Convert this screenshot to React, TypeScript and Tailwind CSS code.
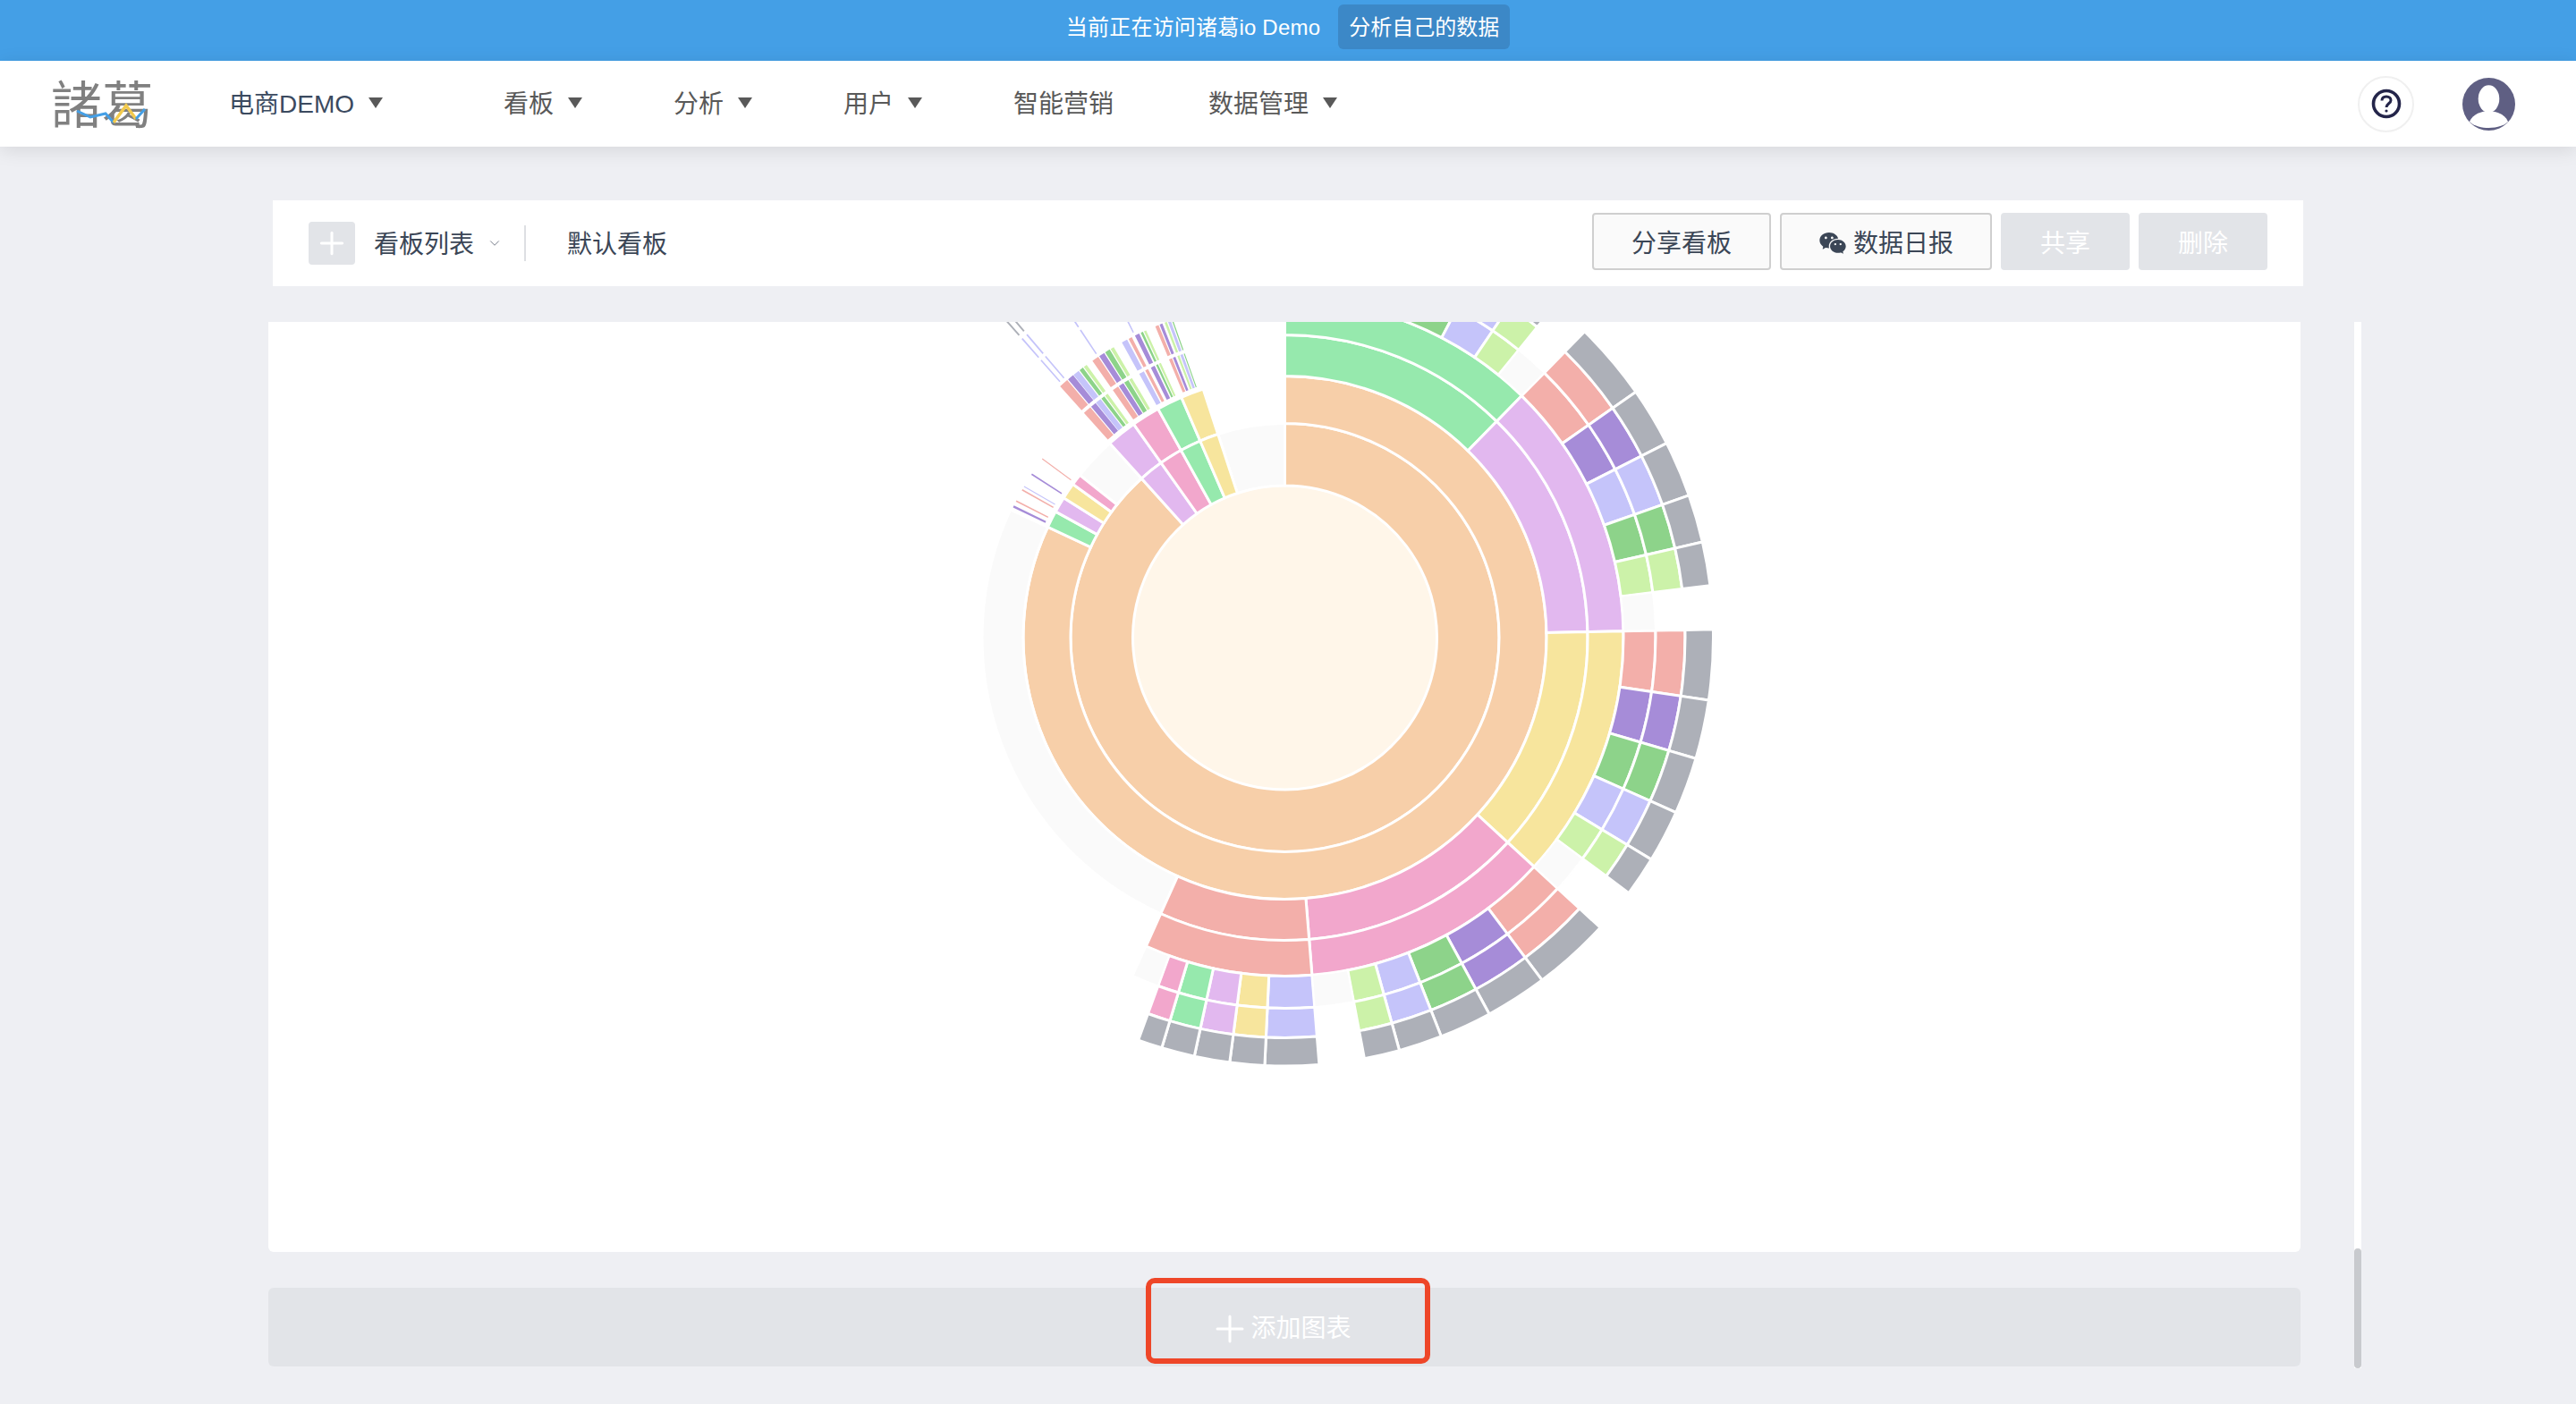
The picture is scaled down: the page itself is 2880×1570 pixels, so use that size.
import React from 'react';
import { ChevronDown, Plus } from 'lucide-react';
import { RiWechatFill } from 'react-icons/ri';

const CX = 1136.5;
const CY = 353;

// ring edges, the white stroke makes the gaps
const R = [170, 239.5, 292.5, 338.5, 378.5, 414.5, 447.5, 479];

const orange = '#f7cfa9';
const green = '#96e9ad';
const purple = '#e2b8ef';
const yellow = '#f7e59d';
const pink = '#f2a7cc';
const red = '#f3afaa';
const dkpurple = '#a68cd8';
const lavender = '#c5c4fa';
const dkgreen = '#8dd38a';
const ltgreen = '#ccf2a9';
const gray = '#adb0b8';
const faint = '#fafafa';

function sector(r0: number, r1: number, a0: number, a1: number) {
  const rad = (a: number) => ((a - 90) * Math.PI) / 180;
  const p = (r: number, a: number) => `${(CX + r * Math.cos(rad(a))).toFixed(2)} ${(CY + r * Math.sin(rad(a))).toFixed(2)}`;
  const large = a1 - a0 > 180 ? 1 : 0;
  return `M${p(r0, a0)} A${r0} ${r0} 0 ${large} 1 ${p(r0, a1)} L${p(r1, a1)} A${r1} ${r1} 0 ${large} 0 ${p(r1, a0)} Z`;
}

type Seg = [number, number, string];

const parents: Seg[] = [
  [0, 44.4, green],
  [44.4, 88.9, purple],
  [88.9, 132.6, yellow],
  [132.6, 175.4, pink],
  [175.4, 204.2, red],
];

const leaves: Seg[] = [
  [14, 21, dkpurple],
  [21, 27.6, dkgreen],
  [27.6, 34.1, lavender],
  [34.1, 39.1, ltgreen],
  [44.4, 55, red],
  [55, 63, dkpurple],
  [63, 70.6, lavender],
  [70.6, 77.1, dkgreen],
  [77.1, 83, ltgreen],
  [88.9, 98.4, red],
  [98.4, 106.4, dkpurple],
  [106.4, 114.1, dkgreen],
  [114.1, 121.2, lavender],
  [121.2, 126.6, ltgreen],
  [132.6, 143.1, red],
  [143.1, 151.5, dkpurple],
  [151.5, 158.6, dkgreen],
  [158.6, 164.5, lavender],
  [164.5, 169.3, ltgreen],
  [175.4, 182.7, lavender],
  [182.7, 187.4, yellow],
  [187.4, 192.2, purple],
  [192.2, 196.7, green],
  [196.7, 200, pink],
];

const ends: [number, number][] = [[39.1, 44.4], [83, 88.9], [126.6, 132.6], [169.3, 175.4], [200, 204.2]];

const small: Seg[] = [
  [-65, -61.2, green],
  [-61.2, -57.7, purple],
  [-57.7, -54.1, yellow],
  [-54.1, -51.6, pink],
  [-42, -35.3, purple],
  [-35.3, -29, pink],
  [-29, -23.3, green],
  [-23.3, -18.2, yellow],
];

// thin strips above the small slices, in rings 3 and 4
const strips: Seg[] = [
  [-64.4, -64, dkpurple],
  [-63.2, -62.9, red],
  [-60.8, -60.5, red],
  [-60, -59.8, lavender],
  [-57.3, -57, dkpurple],
  [-53.7, -53.5, red],
  [-41.8, -40.2, red],
  [-40, -38.9, dkpurple],
  [-38.8, -37.7, lavender],
  [-37.5, -36.8, dkgreen],
  [-36.6, -36, ltgreen],
  [-34.8, -33.6, red],
  [-33.4, -32.4, dkpurple],
  [-32.2, -31.3, dkgreen],
  [-31.1, -30.5, ltgreen],
  [-28.9, -27.9, lavender],
  [-27.6, -27, red],
  [-26.4, -25.6, dkpurple],
  [-25.3, -24.9, dkgreen],
  [-24.7, -24.3, ltgreen],
  [-22.6, -22, red],
  [-21.8, -21.3, dkpurple],
  [-20.9, -20.5, ltgreen],
  [-20.3, -19.8, lavender],
  [-19.6, -19.4, dkgreen],
];

const hair = [-41.3, -40.4, -33.6, -26.4];

function Sunburst() {
  return (
    <svg width="2272" height="1040" className="block">
      <circle cx={CX} cy={CY} r={R[0] - 1} fill="#fff6e9" />
      <path d={sector(R[0], R[1], 0, 318)} fill={orange} stroke="#fff" strokeWidth="3" />
      <path d={sector(R[1], R[2], 0, 295)} fill={orange} stroke="#fff" strokeWidth="3" />
      <path d={sector(R[0], R[1], 341.8, 360)} fill={faint} stroke="#fff" strokeWidth="3" />
      <path d={sector(R[1], R[2], 308.4, 318)} fill={faint} stroke="#fff" strokeWidth="3" />
      <path d={sector(R[2], R[3], 204.2, 295)} fill={faint} stroke="#fff" strokeWidth="3" />
      {small.map(([a, b, c], i) =>
        [1, 0].map((ring) =>
          a < -50 && ring === 0 ? null : (
            <path key={`${i}-${ring}`} d={sector(R[ring], R[ring + 1], a, b)} fill={c} stroke="#fff" strokeWidth="3" />
          )
        )
      )}
      {parents.map(([a, b, c], i) =>
        [2, 3].map((ring) => (
          <path key={`${i}-${ring}`} d={sector(R[ring], R[ring + 1], a, b)} fill={c} stroke="#fff" strokeWidth="3" />
        ))
      )}
      {leaves.map(([a, b, c], i) =>
        [4, 5].map((ring) => (
          <path key={`${i}-${ring}`} d={sector(R[ring], R[ring + 1], a, b)} fill={c} stroke="#fff" strokeWidth="3" />
        ))
      )}
      {leaves.map(([a, b], i) => (
        <path key={i} d={sector(R[6], R[7], a, b)} fill={gray} stroke="#fff" strokeWidth="3" />
      ))}
      {ends.map(([a, b], i) => (
        <path key={i} d={sector(R[4], R[5], a, b)} fill={faint} stroke="#fff" strokeWidth="2" />
      ))}
      {strips.map(([a, b, c], i) => (
        <g key={i}>
          <path d={sector(297, 337, a, b)} fill={c} />
          {a > -50 && <path d={sector(341, 377, a, b)} fill={c} />}
        </g>
      ))}
      {hair.map((a, i) => (
        <g key={i}>
          <path d={sector(381, 413, a - 0.12, a + 0.12)} fill={lavender} />
          <path d={sector(417, 445, a - 0.12, a + 0.12)} fill={lavender} />
          <path d={sector(450, 478, a - 0.12, a + 0.12)} fill={gray} />
        </g>
      ))}
    </svg>
  );
}

function Caret() {
  return (
    <svg width="16" height="12" viewBox="0 0 16 12" className="mb-[4px]">
      <path d="M0 0H16L8 12Z" fill="#595959" />
    </svg>
  );
}

function NavItem({ label, caret = true, className = '' }: { label: string; caret?: boolean; className?: string }) {
  return (
    <div className={`flex items-center gap-[16px] pt-[2px] ${className}`}>
      <span>{label}</span>
      {caret && <Caret />}
    </div>
  );
}

export default function App() {
  return (
    <div className="flex h-[1570px] flex-col overflow-hidden bg-[#eeeff3] font-['Liberation_Sans','Noto_Sans_CJK_SC',sans-serif]">
      <div className="flex h-[68px] items-center justify-center gap-[20px] bg-[#449fe6] pb-[8px] text-[24px] text-white">
        <span className="pt-[2px] tracking-[0.2px]">当前正在访问诸葛io Demo</span>
        <button className="h-[50px] w-[192px] rounded-[6px] bg-[#3c88c7] pt-[2px]">分析自己的数据</button>
      </div>

      <div className="relative z-10 flex h-[96px] items-center bg-white text-[28px] text-[#595959] shadow-[0_4px_20px_rgba(0,0,0,0.1)]">
        <div className="relative ml-[57px] h-[66px] w-[114px] text-center font-['Noto_Sans_CJK_TC',sans-serif] text-[57px] leading-[60px] font-normal text-[#808080]">
          諸葛
          <svg width="114" height="66" viewBox="0 0 114 66" className="absolute top-0 left-0">
            <path d="M29 41L44 48L61 44L70 54" fill="none" stroke="#449fe6" strokeWidth="3" />
            <path d="M70 54L84 35L95 50" fill="none" stroke="#f2ca4e" strokeWidth="3.5" />
            <path d="M95 50L105 39" fill="none" stroke="#449fe6" strokeWidth="3" />
          </svg>
        </div>
        <NavItem label="电商DEMO" className="ml-[85px] gap-[14px] text-[#3b4a5f]" />
        <NavItem label="看板" className="ml-[135px]" />
        <NavItem label="分析" className="ml-[102px]" />
        <NavItem label="用户" className="ml-[102px]" />
        <NavItem label="智能营销" caret={false} className="ml-[102px]" />
        <NavItem label="数据管理" className="ml-[106px]" />
        <div className="ml-auto flex items-center gap-[54px] pr-[68px]">
          <div className="flex h-[63px] w-[63px] items-center justify-center rounded-full border-2 border-[#f0f0f0]">
            <svg width="34" height="34" viewBox="0 0 34 34" fill="none" stroke="#24254a" strokeWidth="3.6">
              <circle cx="17" cy="17" r="14.5" />
              <path d="M12 13.5C12 10.5 14.2 9 17 9C20 9 22 10.8 22 13.2C22 16.6 17 17 17 21" strokeWidth="3" />
              <circle cx="17" cy="25" r="1.6" fill="#24254a" stroke="none" />
            </svg>
          </div>
          <svg width="59" height="59" viewBox="0 0 60 60">
            <circle cx="30" cy="30" r="30" fill="#5f5f83" />
            <ellipse cx="30" cy="24" rx="12" ry="15.5" fill="#fff" />
            <path d="M8 50C12 41 22 38 30 38C38 38 48 41 52 50C46 55 38 57 30 57C22 57 14 55 8 50Z" fill="#fff" />
          </svg>
        </div>
      </div>

      <div className="mt-[60px] ml-[305px] flex h-[96px] w-[2270px] items-center bg-white pr-[40px] pl-[40px] text-[28px] text-[#3b4656]">
        <button className="flex h-[48px] w-[52px] items-center justify-center rounded-[4px] bg-[#e2e4e8] text-white">
          <Plus size={40} strokeWidth={1.8} />
        </button>
        <span className="ml-[21px] pt-[3px]">看板列表</span>
        <ChevronDown size={18} strokeWidth={1.2} className="ml-[14px] text-[#6b7280]" />
        <div className="ml-[24px] h-[40px] w-[2px] bg-[#dddfe3]" />
        <span className="ml-[46px] pt-[3px]">默认看板</span>
        <div className="mb-[4px] ml-auto flex gap-[10px]">
          <button className="h-[64px] w-[200px] rounded-[4px] border-2 border-[#cfcfcf] bg-[#fafafa] pt-[6px]">分享看板</button>
          <button className="flex h-[64px] w-[237px] items-center justify-center gap-[7px] rounded-[4px] border-2 border-[#cfcfcf] bg-[#fafafa] pt-[6px]">
            <RiWechatFill size={32} className="mb-[2px]" />
            数据日报
          </button>
          <button className="h-[64px] w-[144px] rounded-[4px] bg-[#e2e4e8] pt-[6px] text-white">共享</button>
          <button className="h-[64px] w-[144px] rounded-[4px] bg-[#e2e4e8] pt-[6px] text-white">删除</button>
        </div>
      </div>

      <div className="mt-[40px] ml-[300px] flex">
        <div className="w-[2272px]">
          <div className="h-[1040px] overflow-hidden rounded-b-[6px] bg-white">
            <Sunburst />
          </div>
          <div className="relative mt-[40px] flex h-[88px] items-center justify-center rounded-[6px] bg-[#e2e4e8] pt-[4px] pr-[10px] text-[28px] text-white">
            <Plus size={48} strokeWidth={1.5} className="mr-[-1px]" />
            <span>添加图表</span>
            <div className="absolute top-[-11px] left-[981px] h-[96px] w-[318px] rounded-[10px] border-[6px] border-[#ee4628]" />
          </div>
        </div>
        <div className="ml-[60px] flex h-[1170px] w-[8px] flex-col justify-end bg-white">
          <div className="h-[134px] rounded-full bg-[#c8cace]" />
        </div>
      </div>
    </div>
  );
}
